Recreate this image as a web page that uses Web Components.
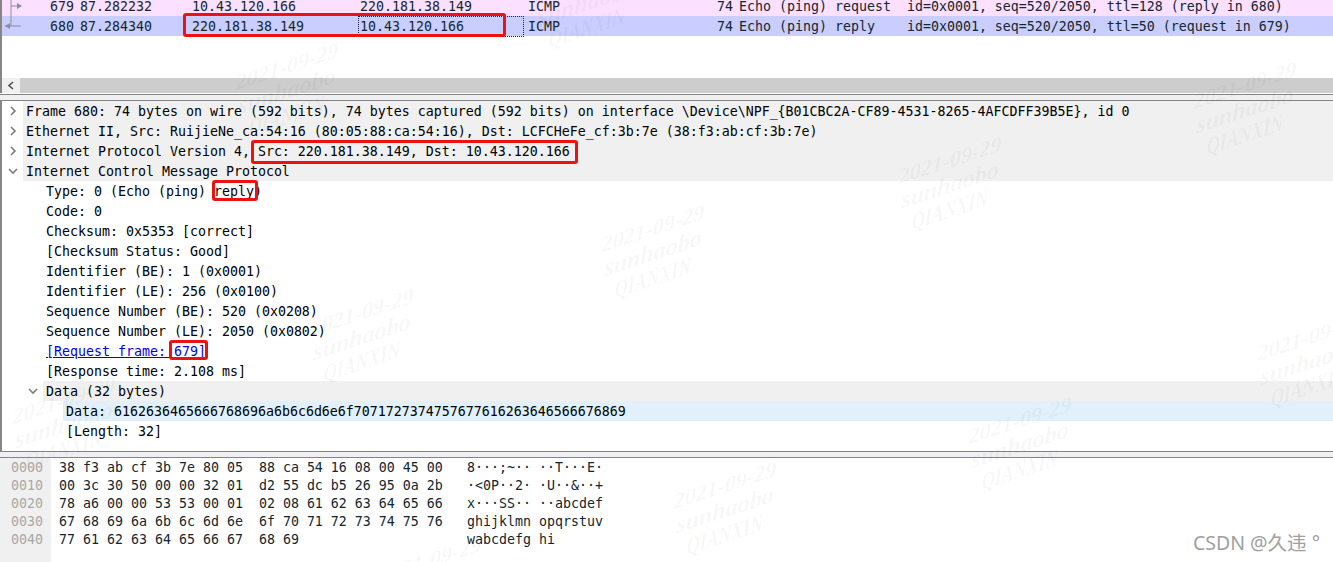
<!DOCTYPE html>
<html>
<head>
<meta charset="utf-8">
<title>capture</title>
<style>
html, body { margin: 0; padding: 0; background: #fff; }
body { width: 1333px; height: 562px; overflow: hidden; position: relative; font: 13.29px/20px "DejaVu Sans Mono", monospace; color: #000; }
</style>
</head>
<body>
<capture-window>
  <packet-list>
    <packet-row rel="request" no="679" time="87.282232" src="10.43.120.166" dst="220.181.38.149" proto="ICMP" len="74" info="Echo (ping) request  id=0x0001, seq=520/2050, ttl=128 (reply in 680)"></packet-row>
    <packet-row rel="reply" selected no="680" time="87.284340" src="220.181.38.149" dst="10.43.120.166" proto="ICMP" len="74" info="Echo (ping) reply    id=0x0001, seq=520/2050, ttl=50 (request in 679)"></packet-row>
  </packet-list>
  <h-scrollbar></h-scrollbar>
  <pane-splitter></pane-splitter>
  <detail-tree>
    <tree-row arrow="closed" tone="band">Frame 680: 74 bytes on wire (592 bits), 74 bytes captured (592 bits) on interface \Device\NPF_{B01CBC2A-CF89-4531-8265-4AFCDFF39B5E}, id 0</tree-row>
    <tree-row arrow="closed" tone="band">Ethernet II, Src: RuijieNe_ca:54:16 (80:05:88:ca:54:16), Dst: LCFCHeFe_cf:3b:7e (38:f3:ab:cf:3b:7e)</tree-row>
    <tree-row arrow="closed" tone="band">Internet Protocol Version 4, Src: 220.181.38.149, Dst: 10.43.120.166</tree-row>
    <tree-row arrow="open" tone="band">Internet Control Message Protocol</tree-row>
    <tree-row level="1">Type: 0 (Echo (ping) reply)</tree-row>
    <tree-row level="1">Code: 0</tree-row>
    <tree-row level="1">Checksum: 0x5353 [correct]</tree-row>
    <tree-row level="1">[Checksum Status: Good]</tree-row>
    <tree-row level="1">Identifier (BE): 1 (0x0001)</tree-row>
    <tree-row level="1">Identifier (LE): 256 (0x0100)</tree-row>
    <tree-row level="1">Sequence Number (BE): 520 (0x0208)</tree-row>
    <tree-row level="1">Sequence Number (LE): 2050 (0x0802)</tree-row>
    <tree-row level="1" link>[Request frame: 679]</tree-row>
    <tree-row level="1">[Response time: 2.108 ms]</tree-row>
    <tree-row level="1" arrow="open" tone="band">Data (32 bytes)</tree-row>
    <tree-row level="2" tone="selected">Data: 6162636465666768696a6b6c6d6e6f7071727374757677616263646566676869</tree-row>
    <tree-row level="2">[Length: 32]</tree-row>
  </detail-tree>
  <pane-splitter></pane-splitter>
  <hex-dump><site-credit>CSDN @久违 °</site-credit></hex-dump>
</capture-window>

<water-mark x="587" y="3"></water-mark>
<water-mark x="287" y="91"></water-mark>
<water-mark x="1245" y="110"></water-mark>
<water-mark x="950" y="185"></water-mark>
<water-mark x="653" y="253"></water-mark>
<water-mark x="362" y="337"></water-mark>
<water-mark x="64" y="425"></water-mark>
<water-mark x="1309" y="362"></water-mark>
<water-mark x="1020" y="445"></water-mark>
<water-mark x="725" y="510"></water-mark>
<water-mark x="430" y="585"></water-mark>

<red-box x="183" y="13" w="323" h="24"></red-box>
<red-box x="251" y="140" w="327" h="24"></red-box>
<red-box x="212" y="180" w="46" h="21"></red-box>
<red-box x="169" y="340" w="39" h="20"></red-box>

<script>
class CaptureWindow extends HTMLElement {
  constructor() {
    super();
    this.attachShadow({ mode: "open" }).innerHTML = `
      <style>
        :host { display: flex; flex-direction: column; width: 1333px; height: 562px; }
      </style>
      <slot></slot>`;
  }
}

class PacketList extends HTMLElement {
  constructor() {
    super();
    this.attachShadow({ mode: "open" }).innerHTML = `
      <style>
        :host { display: block; flex: none; height: 78px; overflow: hidden; border-left: 2px solid #868686; box-sizing: border-box; }
        div { margin-top: -4px; }
      </style>
      <div><slot></slot></div>`;
  }
}

// the frame relation marks in the first column
const relMarks = {
  request: `<path d="M9 0V20M9 10H19" fill="none" stroke="#8c8f9c"/><path d="M15 7l5 3-5 3z" fill="#8c8f9c"/>`,
  reply: `<path d="M9 0V10M3 10H19" fill="none" stroke="#8c8f9c"/><path d="M8 7l-5 3 5 3z" fill="#8c8f9c"/>`,
};

class PacketRow extends HTMLElement {
  connectedCallback() {
    const a = (n) => this.getAttribute(n) || "";
    this.attachShadow({ mode: "open" }).innerHTML = `
      <style>
        :host { display: grid; height: 20px; line-height: 21px; background: #fce0ff; color: #12272e;
          grid-template-columns: 22px 50px 118px 166px 166px 81px 128px 1fr; white-space: pre; }
        :host([selected]) { background: #c9ceff; }
        :host([selected]) .dst { outline: 1px dotted #223; outline-offset: -1px; }
        svg { display: block; }
        .no, .len { text-align: right; }
        .time, .info { padding-left: 6px; }
        .dst { padding-left: 2px; }
        .proto { padding-left: 4px; }
      </style>
      <svg width="22" height="20" viewBox="0 0 22 20">${relMarks[a("rel")] || ""}</svg>
      <span class="no">${a("no")}</span>
      <span class="time">${a("time")}</span>
      <span class="src">${a("src")}</span>
      <span class="dst">${a("dst")}</span>
      <span class="proto">${a("proto")}</span>
      <span class="len">${a("len")}</span>
      <span class="info">${a("info")}</span>`;
  }
}

class HScrollbar extends HTMLElement {
  constructor() {
    super();
    this.attachShadow({ mode: "open" }).innerHTML = `
      <style>
        :host { display: flex; height: 15px; flex: none; margin-bottom: 1px; border-left: 2px solid #868686; background: #cdcdcd; }
        .btn { width: 18px; background: #f0f0f0; display: flex; align-items: center; justify-content: center; }
      </style>
      <div class="btn"><svg width="8" height="9" viewBox="0 0 8 9"><path d="M6 1L2 4.5 6 8" fill="none" stroke="#505050" stroke-width="1.6"/></svg></div>`;
  }
}

class PaneSplitter extends HTMLElement {
  constructor() {
    super();
    this.attachShadow({ mode: "open" }).innerHTML = `
      <style>
        :host { display: block; flex: none; height: 5px; background: #f0f0f0; border-top: 1px solid #85828f; border-bottom: 1px solid #85828f; }
      </style>`;
  }
}

class DetailTree extends HTMLElement {
  constructor() {
    super();
    this.attachShadow({ mode: "open" }).innerHTML = `
      <style>
        :host { display: block; flex: none; height: 350px; box-sizing: border-box; border-left: 2px solid #868686; }
      </style>
      <slot></slot>`;
  }
}

class TreeRow extends HTMLElement {
  connectedCallback() {
    const level = Number(this.getAttribute("level") || 0);
    const arrow = this.getAttribute("arrow");
    const tone = { band: "#f0f0f0", selected: "#e1f0fb" }[this.getAttribute("tone")] || "transparent";
    const shape = arrow === "open" ? "M1 3l4 4 4-4" : "M3 1l4 4-4 4";
    this.attachShadow({ mode: "open" }).innerHTML = `
      <style>
        :host { display: flex; height: 20px; line-height: 21px; white-space: pre; }
        .gutter { flex: none; display: flex; align-items: center; justify-content: flex-end; box-sizing: border-box; padding-right: 5px; }
        .text { flex: 1; padding-left: 3px; }
        :host([link]) .text span { color: #0000ee; text-decoration: underline; }
        svg { display: block; }
      </style>
      <div class="gutter" style="width:${21 + level * 20}px">${arrow ? `<svg width="10" height="10" viewBox="0 0 10 10"><path d="${shape}" fill="none" stroke="#7c7c7c" stroke-width="1.6"/></svg>` : ""}</div>
      <div class="text" style="background:${tone}"><span><slot></slot></span></div>`;
  }
}

const hexLines = [
  ["0000", "38 f3 ab cf 3b 7e 80 05  88 ca 54 16 08 00 45 00", "8···;~·· ··T···E·"],
  ["0010", "00 3c 30 50 00 00 32 01  d2 55 dc b5 26 95 0a 2b", "·<0P··2· ·U··&··+"],
  ["0020", "78 a6 00 00 53 53 00 01  02 08 61 62 63 64 65 66", "x···SS·· ··abcdef"],
  ["0030", "67 68 69 6a 6b 6c 6d 6e  6f 70 71 72 73 74 75 76", "ghijklmn opqrstuv"],
  ["0040", "77 61 62 63 64 65 66 67  68 69", "wabcdefg hi"],
];

class HexDump extends HTMLElement {
  constructor() {
    super();
    const rows = hexLines.map(([o, h, t]) =>
      `<span class="off">${o}</span><span class="hex">${h}</span><span>${t}</span>`).join("");
    this.attachShadow({ mode: "open" }).innerHTML = `
      <style>
        :host { display: flex; flex: 1; min-height: 0; justify-content: space-between; background: linear-gradient(90deg, #f0f0f0 51px, #fff 51px); color: #12272e; }
        .grid { display: grid; grid-template-columns: 51px 416px 200px; grid-auto-rows: 18px; line-height: 19px; white-space: pre; align-self: start; }
        .off { color: #a8a8a8; padding-left: 11px; }
        .hex { padding-left: 8px; }
        slot { display: block; align-self: flex-end; }
      </style>
      <div class="grid">${rows}</div>
      <slot></slot>`;
  }
}

class WaterMark extends HTMLElement {
  connectedCallback() {
    this.style.left = this.getAttribute("x") + "px";
    this.style.top = this.getAttribute("y") + "px";
    this.attachShadow({ mode: "open" }).innerHTML = `
      <style>
        :host { position: absolute; display: flex; flex-direction: column; align-items: center; transform: translate(-50%, -50%) skewY(-18deg);
          font: italic bold 22px/25px "Liberation Serif", serif; color: rgba(0, 0, 0, 0.045); white-space: pre; pointer-events: none; }
        .name { font-size: 24px; }
        .org { font-size: 24px; transform: scaleX(0.74); }
      </style>
      <span>2021-09-29</span><span class="name">sunhaobo</span><span class="org">QIANXIN</span>`;
  }
}

class RedBox extends HTMLElement {
  connectedCallback() {
    const a = (n) => this.getAttribute(n);
    this.style.cssText = `left:${a("x")}px;top:${a("y")}px;width:${a("w")}px;height:${a("h")}px`;
    this.attachShadow({ mode: "open" }).innerHTML = `
      <style>
        :host { position: absolute; box-sizing: border-box; border: 3px solid #ee1111; border-radius: 3px; }
      </style>`;
  }
}

class SiteCredit extends HTMLElement {
  constructor() {
    super();
    this.attachShadow({ mode: "open" }).innerHTML = `
      <style>
        :host { display: block; margin: 0 13px 6px 0; font: 19.5px/26px "Noto Sans", "Noto Sans CJK SC", sans-serif; color: #a0a0a0; white-space: pre; }
      </style>
      <slot></slot>`;
  }
}

customElements.define("capture-window", CaptureWindow);
customElements.define("packet-list", PacketList);
customElements.define("packet-row", PacketRow);
customElements.define("h-scrollbar", HScrollbar);
customElements.define("pane-splitter", PaneSplitter);
customElements.define("detail-tree", DetailTree);
customElements.define("tree-row", TreeRow);
customElements.define("hex-dump", HexDump);
customElements.define("water-mark", WaterMark);
customElements.define("red-box", RedBox);
customElements.define("site-credit", SiteCredit);
</script>
</body>
</html>
